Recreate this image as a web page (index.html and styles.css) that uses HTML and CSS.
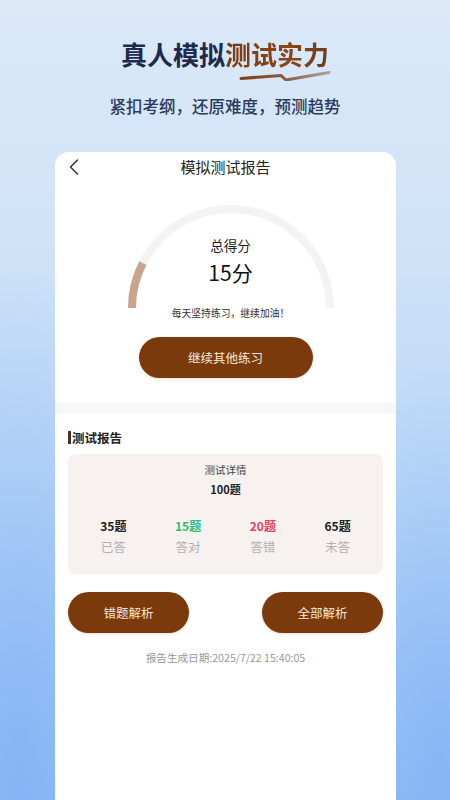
FILE: index.html
```html
<!DOCTYPE html>
<html lang="zh-CN">
<head>
<meta charset="utf-8">
<title>模拟测试报告</title>
<link rel="stylesheet" href="styles.css">
</head>
<body>
<div class="page">
  <header class="hero">
    <h1 class="hero-title"><span class="t-dark">真人模拟</span><span class="t-accent">测试实力<svg class="squiggle" width="92" height="10" viewBox="0 0 92 10"><defs><linearGradient id="sq" x1="0" y1="0" x2="1" y2="0"><stop offset="0" stop-color="#7e3f15"/><stop offset="0.5" stop-color="#8a5a3c"/><stop offset="1" stop-color="#a8a4a6"/></linearGradient></defs><path d="M2 7.5 L42 4.5 L47 9 L90 1.5" fill="none" stroke="url(#sq)" stroke-width="3" stroke-linejoin="round" stroke-linecap="round"/></svg></span></h1>
    <p class="hero-sub">紧扣考纲，还原难度，预测趋势</p>
  </header>

  <main class="card">
    <div class="topbar">
      <svg class="back" width="12" height="18" viewBox="0 0 12 18"><polyline points="9.5,2 2.5,9 9.5,16" fill="none" stroke="#333" stroke-width="1.5" stroke-linecap="round" stroke-linejoin="round"/></svg>
      <span class="topbar-title">模拟测试报告</span>
    </div>

    <section class="score">
      <div class="gauge">
        <svg class="gauge-arc" width="210" height="110" viewBox="0 0 210 110">
          <path d="M6 105 A99 99 0 0 1 204 105" fill="none" stroke="#f3f3f3" stroke-width="8"/>
          <path d="M6 105 A99 99 0 0 1 16.8 60.1" fill="none" stroke="#c9a58d" stroke-width="8"/>
        </svg>
        <div class="gauge-text">
          <div class="score-label">总得分</div>
          <div class="score-value">15分</div>
          <div class="score-tip">每天坚持练习，继续加油！</div>
        </div>
      </div>
      <button class="btn btn-main">继续其他练习</button>
    </section>

    <div class="band"></div>

    <section class="report">
      <h2 class="report-title">测试报告</h2>
      <div class="detail">
        <div class="detail-head">测试详情</div>
        <div class="detail-total">100题</div>
        <div class="stats">
          <div class="stat"><div class="stat-num">35题</div><div class="stat-label">已答</div></div>
          <div class="stat"><div class="stat-num green">15题</div><div class="stat-label">答对</div></div>
          <div class="stat"><div class="stat-num red">20题</div><div class="stat-label">答错</div></div>
          <div class="stat"><div class="stat-num">65题</div><div class="stat-label">未答</div></div>
        </div>
      </div>
      <div class="actions">
        <button class="btn btn-half">错题解析</button>
        <button class="btn btn-half">全部解析</button>
      </div>
      <p class="date">报告生成日期:2025/7/22 15:40:05</p>
    </section>
  </main>
</div>
</body>
</html>
```
FILE: styles.css
```css
* { box-sizing: border-box; }
html, body { margin: 0; padding: 0; }
body {
  width: 450px;
  height: 800px;
  overflow: hidden;
  font-family: "Noto Sans CJK SC", "Noto Sans", sans-serif;
  background:
    radial-gradient(ellipse 140px 500px at 20px 760px, rgba(120,170,245,0.55), rgba(120,170,245,0) 100%),
    radial-gradient(ellipse 120px 400px at 440px 760px, rgba(120,170,245,0.5), rgba(120,170,245,0) 100%),
    linear-gradient(180deg, #dbe9f8 0%, #d0e3f7 30%, #bad7f7 60%, #a0c9f6 85%, #93c0f6 100%);
}
.page {
  display: flex;
  flex-direction: column;
  height: 800px;
}
.hero {
  padding-top: 37px;
  text-align: center;
}
.hero-title {
  margin: 0;
  display: flex;
  justify-content: center;
  font-size: 26px;
  line-height: 34px;
  font-weight: 700;
  letter-spacing: 0;
}
.t-dark { color: #1d2a4e; }
.t-accent {
  position: relative;
  color: #7c3d12;
  background: linear-gradient(90deg, #7a3a10 0%, #8a4518 60%, #6e3a1c 100%);
  -webkit-background-clip: text;
  background-clip: text;
  -webkit-text-fill-color: transparent;
}
.squiggle {
  position: absolute;
  left: 14px;
  top: 34px;
}
.hero-sub {
  margin: 23px 0 0;
  font-size: 16.5px;
  line-height: 24px;
  color: #2b3a5d;
  font-weight: 500;
}
.card {
  margin: 34px 0 0 55px;
  width: 341px;
  flex: 1;
  background: #fff;
  border-radius: 14px 14px 0 0;
  display: flex;
  flex-direction: column;
}
.topbar {
  height: 30px;
  position: relative;
  display: flex;
  align-items: center;
  justify-content: center;
}
.back {
  position: absolute;
  left: 13px;
  top: 6px;
}
.topbar-title {
  font-size: 15px;
  color: #222;
  line-height: 30px;
}
.score {
  display: flex;
  flex-direction: column;
  align-items: center;
  padding-top: 21px;
}
.gauge {
  display: grid;
  width: 210px;
  justify-items: center;
}
.gauge-arc, .gauge-text { grid-area: 1 / 1; }
.gauge-text {
  display: flex;
  flex-direction: column;
  align-items: center;
  padding-top: 34px;
  width: 220px;
}
.score-label {
  font-size: 13.5px;
  line-height: 16px;
  color: #222;
}
.score-value {
  margin-top: 5px;
  font-size: 21px;
  line-height: 28px;
  color: #111;
}
.score-tip {
  margin-top: 20px;
  font-size: 9.8px;
  line-height: 14px;
  color: #333;
}
.btn {
  border: none;
  font-family: "Noto Sans CJK SC", "Noto Sans", sans-serif;
  background: #7a3a0c;
  color: #f7e8da;
  border-radius: 22px;
  box-shadow: 0 1px 3px rgba(180,120,80,0.25);
  padding: 0;
}
.btn-main {
  margin-top: 17px;
  width: 174px;
  height: 41px;
  font-size: 12.5px;
}
.band {
  margin-top: 25px;
  height: 11px;
  background: #f6f7f9;
}
.report {
  padding: 0 13px;
}
.report-title {
  margin: 17px 0 0;
  font-size: 12.5px;
  line-height: 16px;
  font-weight: 700;
  color: #222;
  border-left: 3px solid #4a3020;
  padding-left: 1px;
  height: 13px;
  display: flex;
  align-items: center;
}
.detail {
  margin-top: 10px;
  background: #f7f1ef;
  border-radius: 8px;
  height: 120px;
  padding-top: 8px;
  display: flex;
  flex-direction: column;
  align-items: center;
}
.detail-head {
  font-size: 10.5px;
  line-height: 16px;
  color: #444;
}
.detail-total {
  margin-top: 3px;
  font-size: 11px;
  line-height: 16px;
  font-weight: 700;
  color: #222;
}
.stats {
  margin-top: 21px;
  width: 100%;
  display: grid;
  grid-template-columns: repeat(4, 1fr);
  padding: 0 8px;
}
.stat {
  display: flex;
  flex-direction: column;
  align-items: center;
}
.stat-num {
  font-size: 12px;
  line-height: 16px;
  font-weight: 700;
  color: #222;
}
.stat-num.green { color: #2fbf7a; }
.stat-num.red { color: #e2455e; }
.stat-label {
  margin-top: 5px;
  font-size: 12.5px;
  line-height: 16px;
  color: #b0b0b0;
}
.actions {
  margin-top: 18px;
  display: flex;
  justify-content: space-between;
}
.btn-half {
  width: 121px;
  height: 41px;
  font-size: 12.5px;
}
.date {
  margin: 18px 0 0;
  text-align: center;
  font-size: 10.6px;
  line-height: 14px;
  color: #999;
}
```
